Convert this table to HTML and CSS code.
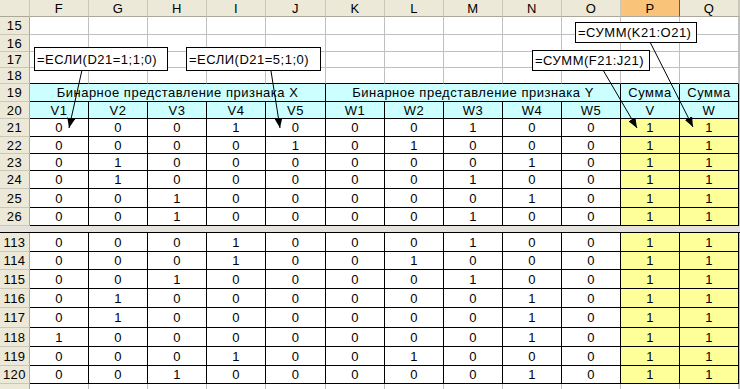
FILE: index.html
```html
<!DOCTYPE html>
<html lang="ru">
<head>
<meta charset="utf-8">
<title>Бинарное представление признаков</title>
<link rel="stylesheet" href="styles.css">
</head>
<body>
<div class="sheet">
  <div class="grid">
    <!-- column headers -->
    <div class="hd"></div>
    <div class="hd">F</div><div class="hd">G</div><div class="hd">H</div><div class="hd">I</div><div class="hd">J</div>
    <div class="hd">K</div><div class="hd">L</div><div class="hd">M</div><div class="hd">N</div><div class="hd">O</div>
    <div class="hd sel">P</div><div class="hd">Q</div><div class="hd"></div>

    <!-- rows 15-18: empty -->
    <div class="rh">15</div>
    <div class="c"></div><div class="c"></div><div class="c"></div><div class="c"></div><div class="c"></div><div class="c"></div><div class="c"></div><div class="c"></div><div class="c"></div><div class="c"></div><div class="c"></div><div class="c"></div><div class="c"></div>
    <div class="rh">16</div>
    <div class="c"></div><div class="c"></div><div class="c"></div><div class="c"></div><div class="c"></div><div class="c"></div><div class="c"></div><div class="c"></div><div class="c"></div><div class="c"></div><div class="c"></div><div class="c"></div><div class="c"></div>
    <div class="rh">17</div>
    <div class="c"></div><div class="c"></div><div class="c"></div><div class="c"></div><div class="c"></div><div class="c"></div><div class="c"></div><div class="c"></div><div class="c"></div><div class="c"></div><div class="c"></div><div class="c"></div><div class="c"></div>
    <div class="rh">18</div>
    <div class="c edge"></div><div class="c edge"></div><div class="c edge"></div><div class="c edge"></div><div class="c edge"></div><div class="c edge"></div><div class="c edge"></div><div class="c edge"></div><div class="c edge"></div><div class="c edge"></div><div class="c edge"></div><div class="c edge"></div><div class="c"></div>

    <!-- row 19: group titles -->
    <div class="rh">19</div>
    <div class="d cy span5">Бинарное представление признака X</div>
    <div class="d cy span5">Бинарное представление признака Y</div>
    <div class="d cy">Сумма</div><div class="d cy">Сумма</div><div class="c"></div>

    <!-- row 20: variable names -->
    <div class="rh">20</div>
    <div class="d cy">V1</div><div class="d cy">V2</div><div class="d cy">V3</div><div class="d cy">V4</div><div class="d cy">V5</div>
    <div class="d cy">W1</div><div class="d cy">W2</div><div class="d cy">W3</div><div class="d cy">W4</div><div class="d cy">W5</div>
    <div class="d cy">V</div><div class="d cy">W</div><div class="c"></div>

    <div class="rh">21</div>
    <div class="d">0</div><div class="d">0</div><div class="d">0</div><div class="d">1</div><div class="d">0</div>
    <div class="d">0</div><div class="d">0</div><div class="d">1</div><div class="d">0</div><div class="d">0</div>
    <div class="d ye">1</div><div class="d ye">1</div><div class="c"></div>
    <div class="rh">22</div>
    <div class="d">0</div><div class="d">0</div><div class="d">0</div><div class="d">0</div><div class="d">1</div>
    <div class="d">0</div><div class="d">1</div><div class="d">0</div><div class="d">0</div><div class="d">0</div>
    <div class="d ye">1</div><div class="d ye">1</div><div class="c"></div>
    <div class="rh">23</div>
    <div class="d">0</div><div class="d">1</div><div class="d">0</div><div class="d">0</div><div class="d">0</div>
    <div class="d">0</div><div class="d">0</div><div class="d">0</div><div class="d">1</div><div class="d">0</div>
    <div class="d ye">1</div><div class="d ye">1</div><div class="c"></div>
    <div class="rh">24</div>
    <div class="d">0</div><div class="d">1</div><div class="d">0</div><div class="d">0</div><div class="d">0</div>
    <div class="d">0</div><div class="d">0</div><div class="d">1</div><div class="d">0</div><div class="d">0</div>
    <div class="d ye">1</div><div class="d ye">1</div><div class="c"></div>
    <div class="rh">25</div>
    <div class="d">0</div><div class="d">0</div><div class="d">1</div><div class="d">0</div><div class="d">0</div>
    <div class="d">0</div><div class="d">0</div><div class="d">0</div><div class="d">1</div><div class="d">0</div>
    <div class="d ye">1</div><div class="d ye">1</div><div class="c"></div>
    <div class="rh">26</div>
    <div class="d">0</div><div class="d">0</div><div class="d">1</div><div class="d">0</div><div class="d">0</div>
    <div class="d">0</div><div class="d">0</div><div class="d">1</div><div class="d">0</div><div class="d">0</div>
    <div class="d ye">1</div><div class="d ye">1</div><div class="c"></div>

    <!-- frozen-pane split bar -->
    <div class="split"></div>

    <div class="rh">113</div>
    <div class="d">0</div><div class="d">0</div><div class="d">0</div><div class="d">1</div><div class="d">0</div>
    <div class="d">0</div><div class="d">0</div><div class="d">1</div><div class="d">0</div><div class="d">0</div>
    <div class="d ye">1</div><div class="d ye">1</div><div class="c"></div>
    <div class="rh">114</div>
    <div class="d">0</div><div class="d">0</div><div class="d">0</div><div class="d">1</div><div class="d">0</div>
    <div class="d">0</div><div class="d">1</div><div class="d">0</div><div class="d">0</div><div class="d">0</div>
    <div class="d ye">1</div><div class="d ye">1</div><div class="c"></div>
    <div class="rh">115</div>
    <div class="d">0</div><div class="d">0</div><div class="d">1</div><div class="d">0</div><div class="d">0</div>
    <div class="d">0</div><div class="d">0</div><div class="d">1</div><div class="d">0</div><div class="d">0</div>
    <div class="d ye">1</div><div class="d ye">1</div><div class="c"></div>
    <div class="rh">116</div>
    <div class="d">0</div><div class="d">1</div><div class="d">0</div><div class="d">0</div><div class="d">0</div>
    <div class="d">0</div><div class="d">0</div><div class="d">0</div><div class="d">1</div><div class="d">0</div>
    <div class="d ye">1</div><div class="d ye">1</div><div class="c"></div>
    <div class="rh">117</div>
    <div class="d">0</div><div class="d">1</div><div class="d">0</div><div class="d">0</div><div class="d">0</div>
    <div class="d">0</div><div class="d">0</div><div class="d">0</div><div class="d">1</div><div class="d">0</div>
    <div class="d ye">1</div><div class="d ye">1</div><div class="c"></div>
    <div class="rh">118</div>
    <div class="d">1</div><div class="d">0</div><div class="d">0</div><div class="d">0</div><div class="d">0</div>
    <div class="d">0</div><div class="d">0</div><div class="d">0</div><div class="d">1</div><div class="d">0</div>
    <div class="d ye">1</div><div class="d ye">1</div><div class="c"></div>
    <div class="rh">119</div>
    <div class="d">0</div><div class="d">0</div><div class="d">0</div><div class="d">1</div><div class="d">0</div>
    <div class="d">0</div><div class="d">1</div><div class="d">0</div><div class="d">0</div><div class="d">0</div>
    <div class="d ye">1</div><div class="d ye">1</div><div class="c"></div>
    <div class="rh">120</div>
    <div class="d">0</div><div class="d">0</div><div class="d">1</div><div class="d">0</div><div class="d">0</div>
    <div class="d">0</div><div class="d">0</div><div class="d">0</div><div class="d">1</div><div class="d">0</div>
    <div class="d ye">1</div><div class="d ye">1</div><div class="c"></div>

    <!-- next row, only its top edge is in view -->
    <div class="rh"></div>
    <div class="c"></div><div class="c"></div><div class="c"></div><div class="c"></div><div class="c"></div><div class="c"></div><div class="c"></div><div class="c"></div><div class="c"></div><div class="c"></div><div class="c"></div><div class="c"></div><div class="c"></div>
  </div>

  <!-- formula callouts -->
  <div class="note n1">=ЕСЛИ(D21=1;1;0)</div>
  <div class="note n2">=ЕСЛИ(D21=5;1;0)</div>
  <div class="note n3">=СУММ(K21:O21)</div>
  <div class="note n4">=СУММ(F21:J21)</div>

  <svg class="arrows" width="740" height="389" viewBox="0 0 740 389">
    <defs>
      <marker id="head" markerWidth="10" markerHeight="8" refX="10" refY="4" orient="auto" markerUnits="userSpaceOnUse">
        <path d="M0,0 L10,4 L0,8 Z" fill="#000"/>
      </marker>
    </defs>
    <line x1="82" y1="70" x2="69" y2="128" stroke="#000" stroke-width="1" marker-end="url(#head)"/>
    <line x1="271" y1="71" x2="280" y2="128" stroke="#000" stroke-width="1" marker-end="url(#head)"/>
    <line x1="603" y1="70" x2="637" y2="128" stroke="#000" stroke-width="1" marker-end="url(#head)"/>
    <line x1="650" y1="42" x2="693" y2="127" stroke="#000" stroke-width="1" marker-end="url(#head)"/>
  </svg>
</div>
</body>
</html>
```

FILE: styles.css
```css
* {
  box-sizing: border-box;
}

body {
  margin: 0;
  background: #fff;
  color: #000;
  font-family: "Liberation Sans", Arial, sans-serif;
  font-size: 13px;
  letter-spacing: 0.5px;
}

.sheet {
  position: relative;
  width: 740px;
  height: 389px;
  overflow: hidden;
}

.grid {
  display: grid;
  grid-template-columns: 30px repeat(4, 59px) 60px repeat(7, 59px) 1fr;
  grid-template-rows:
    17px 18px 17px 16px 16px 18px 17px
    18px 17px 17px 18px 19px 18px
    7px
    19px 18px 19px 19px 20px 19px 19px 18px
    18px;
}

.grid > div {
  display: flex;
  align-items: center;
  justify-content: center;
  white-space: nowrap;
  overflow: hidden;
  line-height: 15px;
}

/* column letters */
.hd {
  background: #ece9d8;
  border-right: 1px solid #cbc7b8;
  border-bottom: 1px solid #aca899;
}

.hd.sel {
  background: #f9c47a;
  border-right-color: #3d5aa8;
}

/* row numbers */
.rh {
  background: #ece9d8;
  border-right: 1px solid #aca899;
  border-bottom: 1px solid #cbc7b8;
}

/* plain gridline cells */
.c {
  border-right: 1px solid #c0c0c0;
  border-bottom: 1px solid #c0c0c0;
}

.c.edge {
  border-bottom-color: #000;
}

/* bordered table cells */
.d {
  border-right: 1px solid #000;
  border-bottom: 1px solid #000;
}

.cy {
  background: #ccffff;
}

.ye {
  background: #ffff99;
}

.span5 {
  grid-column: span 5;
}

.split {
  grid-column: 1 / -1;
  background: #e4e2da;
  border-bottom: 1px solid #000;
}

/* formula callouts */
.note {
  position: absolute;
  display: flex;
  align-items: center;
  padding: 0 2px;
  background: #fff;
  border: 1px solid #000;
  white-space: nowrap;
}

.n1 {
  left: 34px;
  top: 47px;
  width: 134px;
  height: 24px;
}

.n2 {
  left: 186px;
  top: 47px;
  width: 135px;
  height: 24px;
}

.n3 {
  left: 575px;
  top: 22px;
  width: 122px;
  height: 21px;
}

.n4 {
  left: 532px;
  top: 50px;
  width: 118px;
  height: 21px;
}

.arrows {
  position: absolute;
  left: 0;
  top: 0;
  pointer-events: none;
}
```
